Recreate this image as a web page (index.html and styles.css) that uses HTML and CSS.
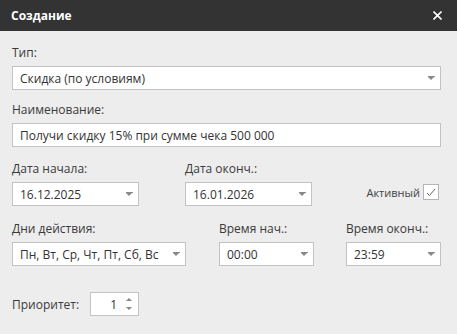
FILE: index.html
```html
<!DOCTYPE html>
<html lang="ru">
<head>
<meta charset="utf-8">
<link rel="stylesheet" href="styles.css">
</head>
<body>
<div class="dialog">
  <div class="titlebar">
    <span class="title">Создание</span>
    <svg class="close" width="9" height="9" viewBox="0 0 9 9"><path d="M0.5 0.5 L8.5 8.5 M8.5 0.5 L0.5 8.5" stroke="#fff" stroke-width="1.6"/></svg>
  </div>
  <div class="content">
    <div class="field f-type">
      <div class="label">Тип:</div>
      <div class="box combo"><span class="val">Скидка (по условиям)</span><span class="arrow"></span></div>
    </div>
    <div class="field f-name">
      <div class="label">Наименование:</div>
      <div class="box"><span class="val">Получи скидку 15% при сумме чека 500 000</span></div>
    </div>
    <div class="row r-dates">
      <div class="field w-date">
        <div class="label">Дата начала:</div>
        <div class="box combo"><span class="val">16.12.2025</span><span class="arrow"></span></div>
      </div>
      <div class="field w-date2">
        <div class="label">Дата оконч.:</div>
        <div class="box combo"><span class="val">16.01.2026</span><span class="arrow"></span></div>
      </div>
      <div class="active">
        <span class="active-label">Активный</span>
        <span class="check"><svg width="10" height="9" viewBox="0 0 10 9"><path d="M1 5 L3.5 7.5 L9 1" fill="none" stroke="#666" stroke-width="1"/></svg></span>
      </div>
    </div>
    <div class="row r-days">
      <div class="field w-days">
        <div class="label">Дни действия:</div>
        <div class="box combo"><span class="val">Пн, Вт, Ср, Чт, Пт, Сб, Вс</span><span class="arrow"></span></div>
      </div>
      <div class="field w-time">
        <div class="label">Время нач.:</div>
        <div class="box combo"><span class="val">00:00</span><span class="arrow"></span></div>
      </div>
      <div class="field w-time2">
        <div class="label">Время оконч.:</div>
        <div class="box combo"><span class="val">23:59</span><span class="arrow"></span></div>
      </div>
    </div>
    <div class="prio">
      <span class="prio-label">Приоритет:</span>
      <div class="box spin"><span class="num">1</span><span class="spin-btns"><span class="up"></span><span class="down"></span></span></div>
    </div>
  </div>
</div>
</body>
</html>
```
FILE: styles.css
```css
html, body {
  margin: 0;
  padding: 0;
}
body {
  background: #ededed;
  font-family: "Open Sans", "Noto Sans", sans-serif;
  font-size: 12px;
  color: #333;
}
.dialog {
  width: 457px;
  height: 334px;
  background: #ededed;
  overflow: hidden;
}
.titlebar {
  height: 31px;
  background: #333333;
  color: #fff;
  display: flex;
  align-items: center;
  justify-content: space-between;
  padding: 0 15px 0 11px;
}
.title {
  font-weight: bold;
  font-size: 12px;
}
.content {
  padding: 14px 16px 0 12px;
}
.label {
  line-height: 16px;
  height: 16px;
  margin-bottom: 5px;
  color: #3a3a3a;
}
.box {
  box-sizing: border-box;
  height: 24px;
  border: 1px solid #c3c3c3;
  background: #fff;
  display: flex;
  align-items: center;
  padding-left: 7px;
  position: relative;
}
.val {
  white-space: nowrap;
  color: #333;
}
.arrow {
  margin-left: auto;
  margin-right: 5px;
  width: 7px;
  height: 4px;
  position: relative;
}
.arrow::before {
  content: "";
  position: absolute;
  left: 0;
  top: 0;
  width: 7px;
  height: 1px;
  background: #888;
}
.arrow::after {
  content: "";
  position: absolute;
  left: 0;
  top: 1px;
  border-left: 3.5px solid transparent;
  border-right: 3.5px solid transparent;
  border-top: 3px solid #888;
}
.f-name {
  margin-top: 12px;
}
.row {
  display: flex;
  align-items: flex-end;
}
.r-dates {
  margin-top: 14px;
}
.w-date { width: 127px; }
.w-date2 { width: 127px; margin-left: 46px; }
.active {
  margin-left: auto;
  margin-right: 2px;
  display: flex;
  align-items: center;
  margin-bottom: 6px;
}
.active-label {
  font-size: 11px;
  color: #444;
  margin-right: 3px;
}
.check {
  box-sizing: border-box;
  width: 16px;
  height: 16px;
  border: 1px solid #b5b5b5;
  background: #fff;
  display: flex;
  align-items: center;
  justify-content: center;
}
.r-days {
  margin-top: 15px;
}
.w-days { width: 174px; }
.w-time { width: 95px; margin-left: 33px; }
.w-time2 { width: 95px; margin-left: 32px; }
.prio {
  margin-top: 26px;
  display: flex;
  align-items: center;
}
.prio-label {
  width: 78px;
  color: #3a3a3a;
}
.spin {
  width: 49px;
  padding-left: 0;
  padding-right: 4px;
  justify-content: flex-end;
}
.num {
  margin-right: 9px;
}
.spin-btns {
  display: flex;
  flex-direction: column;
  gap: 6px;
  width: 7px;
  margin-right: 1px;
}
.up, .down {
  width: 0;
  height: 0;
  border-left: 3.5px solid transparent;
  border-right: 3.5px solid transparent;
}
.up { border-bottom: 3px solid #888; }
.down { border-top: 3px solid #888; }
```
